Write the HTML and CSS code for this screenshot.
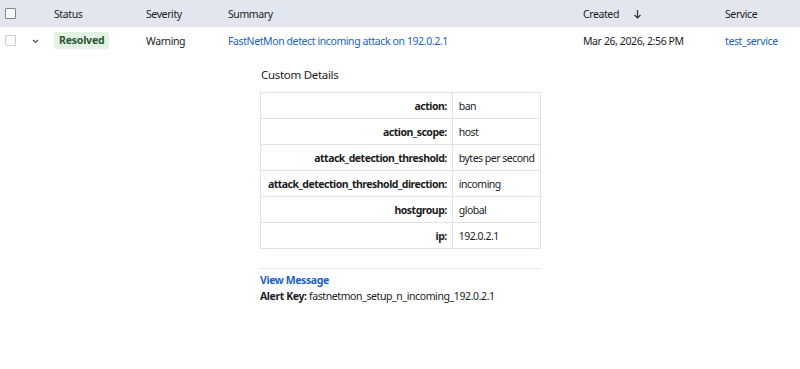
FILE: index.html
```html
<!DOCTYPE html>
<html lang="en">
<head>
  <meta charset="UTF-8">
  <meta name="viewport" content="width=device-width, initial-scale=1.0">
  <title>Alerts</title>
  <link rel="stylesheet" href="styles.css">
</head>
<body>
  <div class="grid head">
    <div><span class="check"></span></div>
    <div></div>
    <div>Status</div>
    <div>Severity</div>
    <div>Summary</div>
    <div class="sorted">Created
      <svg class="arrow" width="9" height="10" viewBox="0 0 9 10"><path d="M4.5 1v8M1.5 6l3 3 3-3" fill="none" stroke="#333" stroke-width="1.2"/></svg>
    </div>
    <div>Service</div>
  </div>

  <div class="grid row">
    <div><span class="check light"></span></div>
    <div><svg width="7" height="5" viewBox="0 0 7 5"><path d="M1 1l2.5 2.5L6 1" fill="none" stroke="#555" stroke-width="1.2"/></svg></div>
    <div><span class="badge">Resolved</span></div>
    <div>Warning</div>
    <div><a href="#">FastNetMon detect incoming attack on 192.0.2.1</a></div>
    <div>Mar 26, 2026, 2:56 PM</div>
    <div><a href="#">test_service</a></div>
  </div>

  <div class="details">
    <h3>Custom Details</h3>
    <table class="kv">
      <tr><th>action:</th><td>ban</td></tr>
      <tr><th>action_scope:</th><td>host</td></tr>
      <tr><th>attack_detection_threshold:</th><td>bytes per second</td></tr>
      <tr><th>attack_detection_threshold_direction:</th><td>incoming</td></tr>
      <tr><th>hostgroup:</th><td>global</td></tr>
      <tr><th>ip:</th><td>192.0.2.1</td></tr>
    </table>
    <div class="foot">
      <a href="#" class="view">View Message</a>
      <div><b>Alert Key:</b> fastnetmon_setup_n_incoming_192.0.2.1</div>
    </div>
  </div>
</body>
</html>
```

FILE: styles.css
```css
body {
  font-family: "Noto Sans", sans-serif;
  font-size: 10.5px;
  letter-spacing: -0.4px;
  color: #1c1c1c;
  background: #fff;
  margin: 0;
}
a {
  color: #1a5fc8;
  text-decoration: none;
}
.grid {
  display: grid;
  grid-template-columns: 24px 25px 92px 82px 355px 142px auto;
  padding-left: 5px;
  align-items: center;
}
.head {
  height: 27px;
  background: #e2e7ef;
}
.row {
  height: 27px;
}
.check {
  display: block;
  width: 9px;
  height: 9px;
  border: 1px solid #7d8793;
  border-radius: 1px;
  background: #fff;
}
.check.light {
  border-color: #c9ced6;
}
.sorted {
  display: flex;
  align-items: center;
}
.arrow {
  margin-left: 14px;
}
.row svg {
  margin-left: 3px;
  margin-top: 2px;
  display: block;
}
.badge {
  display: inline-block;
  background: #e2f3e4;
  color: #2a5533;
  font-weight: bold;
  letter-spacing: -0.2px;
  padding: 1px 5px 2px;
  border-radius: 3px;
}
.details {
  margin-left: 260px;
  width: 281px;
}
.details h3 {
  font-size: 11.5px;
  letter-spacing: -0.3px;
  font-weight: normal;
  margin: 13px 0 10px 1px;
}
.kv {
  border-collapse: collapse;
  width: 281px;
  letter-spacing: -0.5px;
}
.kv th, .kv td {
  border: 1px solid #dde3eb;
  height: 25px;
  white-space: nowrap;
}
.kv th {
  text-align: right;
  padding: 0 5px 0 6px;
}
.kv td {
  text-align: left;
  padding: 0 5px 0 6px;
}
.foot {
  margin-top: 19px;
  border-top: 1px solid #e3e7ec;
  padding-top: 3px;
  line-height: 16px;
}
.view {
  display: block;
  font-weight: bold;
}
```
